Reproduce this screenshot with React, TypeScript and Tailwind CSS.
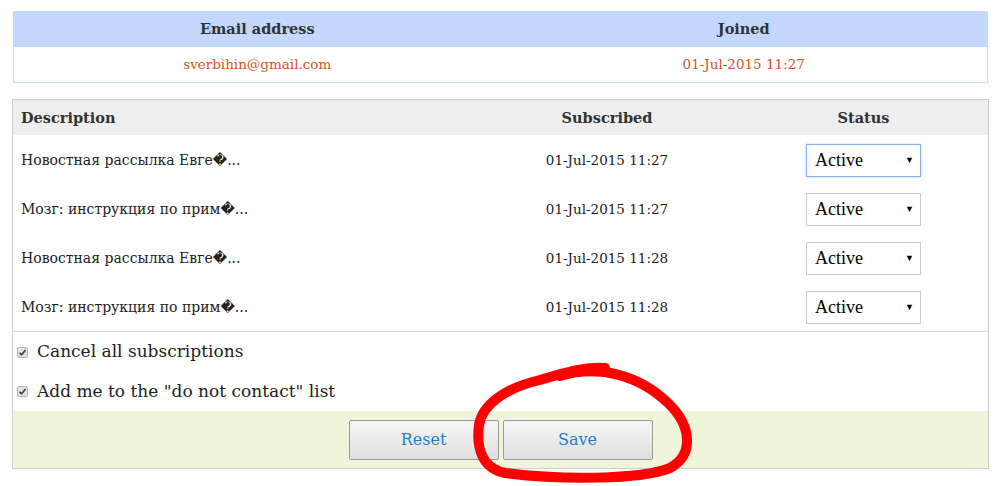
import React from "react";

const rows = [
  { d: "Новостная рассылка Евге\uFFFD...", s: "01-Jul-2015 11:27", focus: true },
  { d: "Мозг: инструкция по прим\uFFFD...", s: "01-Jul-2015 11:27" },
  { d: "Новостная рассылка Евге\uFFFD...", s: "01-Jul-2015 11:28" },
  { d: "Мозг: инструкция по прим\uFFFD...", s: "01-Jul-2015 11:28" },
];

function Select({ focus }: { focus?: boolean }) {
  return (
    <div
      className={`flex items-center justify-between w-[115px] h-[33px] bg-white pl-[8px] pr-[6px] font-['Liberation_Serif',serif] text-[18px] text-black border ${
        focus ? "border-[#8cb0e8] shadow-[0_0_2px_#a9c6f2]" : "border-[#cccccc]"
      }`}
    >
      <span>Active</span>
      <span className="text-[9px] leading-none">▼</span>
    </div>
  );
}

function Check({ label, h }: { label: string; h: string }) {
  return (
    <div className={`flex items-center pl-[4px] ${h}`}>
      <div className="w-[11px] h-[11px] rounded-[2px] border border-[#b5b5b5] bg-[#e3e3e3] flex items-center justify-center mr-[9px]">
        <svg width="9" height="9" viewBox="0 0 9 9">
          <path d="M1.5 4.8 L3.6 6.8 L7.6 2" stroke="#444" strokeWidth="1.7" fill="none" />
        </svg>
      </div>
      <span className="text-[17px] text-[#222]">{label}</span>
    </div>
  );
}

export default function App() {
  return (
    <div className="relative w-[1004px] h-[486px] bg-white font-['DejaVu_Serif',serif] text-[#333]">
      <div className="pt-[11px] pl-[13px] pr-[16px]">
        <div className="border border-t-0 border-[#c6d9fb]">
          <div className="grid grid-cols-2 h-[36px] bg-[#c3d8fc] items-center text-center font-bold text-[14.5px] text-[#333]">
            <div>Email address</div>
            <div>Joined</div>
          </div>
          <div className="grid grid-cols-2 h-[35px] items-center text-center text-[13.5px] text-[#d0561e]">
            <div>sverbihin@gmail.com</div>
            <div>01-Jul-2015 11:27</div>
          </div>
        </div>
      </div>

      <div className="mt-[16px] ml-[12px] mr-[15px] border border-[#cfcfcf]">
        <div className="grid grid-cols-[466px_256px_1fr] h-[35px] bg-[#eeeeee] items-center font-bold text-[14.5px] text-[#333]">
          <div className="pl-[8px]">Description</div>
          <div className="text-center">Subscribed</div>
          <div className="text-center pl-[4px]">Status</div>
        </div>
        {rows.map((r, i) => (
          <div key={i} className="grid grid-cols-[466px_256px_1fr] h-[49px] items-center text-[14px] text-[#222]">
            <div className="pl-[8px] pt-[1px]">{r.d}</div>
            <div className="text-center text-[13.5px] pt-[1px]">{r.s}</div>
            <div className="flex justify-center pl-[4px] pt-[1px]">
              <Select focus={r.focus} />
            </div>
          </div>
        ))}
        <div className="border-t border-[#d6d6d6]">
          <Check label="Cancel all subscriptions" h="h-[40px]" />
          <Check label={'Add me to the "do not contact" list'} h="h-[39px]" />
        </div>
        <div className="h-[57px] bg-[#eff5da] flex justify-center gap-[4px] pt-[9px]">
          <button className="w-[150px] h-[40px] border border-[#9a9a9a] rounded-[2px] bg-gradient-to-b from-[#f6f6f6] to-[#dfdfdf] text-[16px] text-[#1e80c8] font-['DejaVu_Serif',serif]">
            Reset
          </button>
          <button className="w-[150px] h-[40px] border border-[#9a9a9a] rounded-[2px] bg-gradient-to-b from-[#f6f6f6] to-[#dfdfdf] text-[16px] text-[#1e80c8] font-['DejaVu_Serif',serif]">
            Save
          </button>
        </div>
      </div>

      <svg className="absolute left-0 top-0 pointer-events-none" width="1004" height="486" viewBox="0 0 1004 486">
        <path
          d="M 560 376 C 600 364, 640 376, 668 403 C 692 426, 694 455, 670 468 C 640 480, 560 480, 505 473 C 482 468, 476 448, 479 425 C 482 405, 505 388, 540 380 C 560 374, 585 366, 605 368"
          stroke="#ff0000"
          strokeWidth="10"
          fill="none"
          strokeLinecap="round"
          strokeLinejoin="round"
        />
      </svg>
    </div>
  );
}
